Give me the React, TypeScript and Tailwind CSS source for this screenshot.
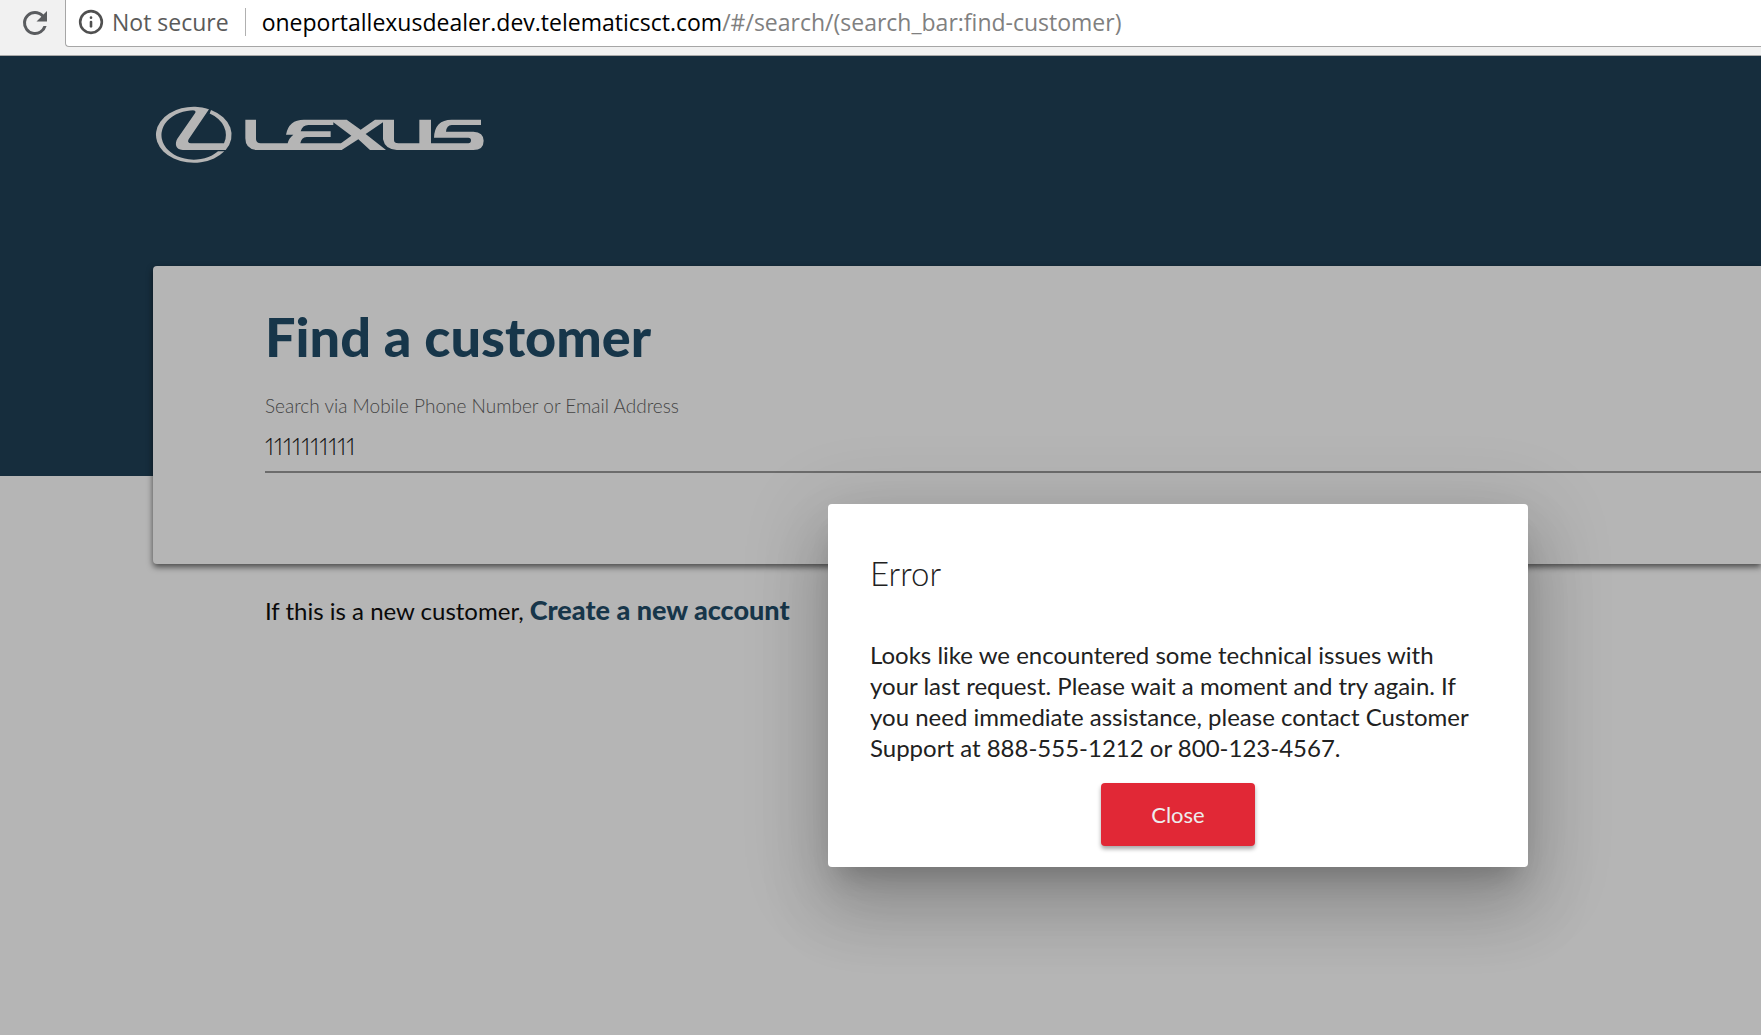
import { Info } from "lucide-react";

function ReloadIcon() {
  return (
    <svg viewBox="0 0 24 24" className="h-9 w-9" fill="#5a5c5f" aria-hidden="true">
      <path d="M17.65 6.35A7.95 7.95 0 0 0 12 4a8 8 0 1 0 7.73 10h-2.08A6 6 0 1 1 12 6c1.66 0 3.14.69 4.22 1.78L13 11h7V4z" />
    </svg>
  );
}

function Logo() {
  return (
    <svg viewBox="45 48 990 174" className="h-[58px] w-[330px]" fill="#b5b5b5" role="img" aria-label="Lexus">
      <path d="M207 57.5A113.500 84 0 1 0 253 184H234A97 74 0 1 1 165 61Z" />
      <path d="M160 52L207 58L146 148Q140 159 153 160H252A97 74 0 0 0 209 70.700L213 60A113.500 84 0 0 1 257 180H128C106 178 104 160 112 146L166 68Q168 62 160 61Z" />
      <path
        fillRule="evenodd"
        d="M316 89H348V148Q349 160 362 160H443Q446 145 460 134H438Q446 89 492 89H620L662 119L705 89H762V150Q762 160 775 160H838V89H873V160H985Q993 160 993 151Q993 143 985 143H882Q884 89 935 89H1023V105H935Q920 105 918 125H1000Q1031 127 1031 152Q1031 180 1000 180H770Q735 178 729 148V97L677 132L738 180H690L655 148L605 180H350Q316 178 316 145ZM482 124Q488 105 505 105H580V97L634 137L603 160H481Q484 142 500 141H572V124Z"
      />
    </svg>
  );
}

function BrowserBar() {
  return (
    <div className="flex h-14 border-b border-[#a9a9a9] bg-[#f1f1f1] pb-2 font-['Open_Sans',sans-serif] text-[23px]">
      <button type="button" aria-label="Reload" className="flex w-[65px] shrink-0 items-center justify-center pb-0.5 pl-1">
        <ReloadIcon />
      </button>
      <div className="flex min-w-0 grow items-center rounded-bl-sm border-b border-l border-[#a6a6a6] bg-white pb-0.5 pl-3 whitespace-nowrap">
        <Info className="h-[26px] w-[26px] shrink-0 text-[#505050]" strokeWidth={2.4} />
        <span className="ml-2 text-[#5a5a5a]">Not secure</span>
        <span className="mx-4 h-7 w-px shrink-0 bg-[#b0b0b0]" />
        <span className="text-[#808080]">
          <span className="text-black">oneportallexusdealer.dev.telematicsct.com</span>
          /#/search/(search_bar:find-customer)
        </span>
      </div>
    </div>
  );
}

function ErrorDialog() {
  return (
    <div
      role="alertdialog"
      aria-labelledby="error-title"
      aria-describedby="error-text"
      className="flex w-[700px] shrink-0 flex-col rounded bg-white px-[42px] pt-[47px] pb-[21px] text-[#212121] shadow-[0_19px_26px_-12px_rgba(0,0,0,0.2),0_42px_66px_5px_rgba(0,0,0,0.14),0_16px_80px_14px_rgba(0,0,0,0.12)]"
    >
      <h2 id="error-title" className="text-[33px] leading-[44px] font-light">
        Error
      </h2>
      <p id="error-text" className="mt-11 text-2xl leading-[31px]">
        Looks like we encountered some technical issues with your last request. Please wait a moment and try again. If
        you need immediate assistance, please contact Customer Support at 888-555-1212 or 800-123-4567.
      </p>
      <button
        type="button"
        className="mt-5 h-[63px] w-[154px] self-center rounded-sm bg-[#e12836] text-[22px] text-[#ededed] shadow-[0_3px_4px_rgba(0,0,0,0.35)]"
      >
        Close
      </button>
    </div>
  );
}

export default function App() {
  return (
    <div className="flex min-h-screen flex-col overflow-hidden">
      <BrowserBar />
      <main className="relative grow bg-[#b5b5b5] font-['Lato',sans-serif]">
        <div className="bg-linear-to-b from-[#162d3d] from-[420px] to-transparent to-[420px]">
          <header className="h-[210px] pt-[50px] pl-[155px]">
            <Logo />
          </header>
          <form className="ml-[153px] h-[298px] rounded-l bg-[#b5b5b5] pt-9 pl-28 shadow-[0_3px_6px_rgba(0,0,0,0.6)]">
            <h1 className="text-[54px] leading-[70px] font-black text-[#17364a]">Find a customer</h1>
            <label htmlFor="query" className="mt-5 block text-[19px] leading-7 font-light text-[#444]">
              Search via Mobile Phone Number or Email Address
            </label>
            <input
              id="query"
              defaultValue="1111111111"
              className="mt-1 block h-[49px] w-full border-b-2 border-[#6c6c6c] pb-1 text-2xl font-light text-[#111] proportional-nums outline-none"
            />
          </form>
        </div>
        <p className="mt-8 ml-[265px] text-2xl leading-7 text-[#0a0a0a]">
          If this is a new customer,{" "}
          <a href="#create" className="text-[27px] font-black text-[#17364a]">
            Create a new account
          </a>
        </p>
        <div className="absolute inset-0 flex items-start pt-[448px] pl-[828px]">
          <ErrorDialog />
        </div>
      </main>
    </div>
  );
}
